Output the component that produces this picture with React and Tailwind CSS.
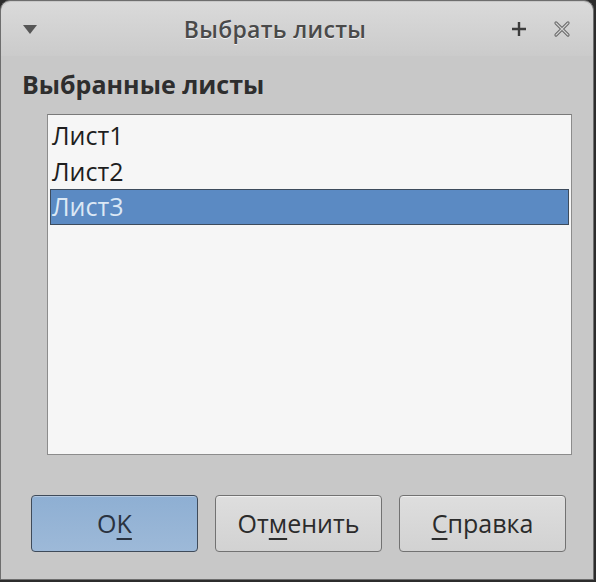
import { useState } from 'react'

const sheets = ['Лист1', 'Лист2', 'Лист3']

function CloseIcon() {
  return (
    <svg width="18" height="18" viewBox="0 0 18 18" className="text-[#6a6a6a]">
      <path d="M3 3 L15 15 M15 3 L3 15" stroke="currentColor" strokeWidth="3.2" strokeLinecap="round" />
      <path d="M3 3 L15 15 M15 3 L3 15" stroke="#d4d4d4" strokeWidth="1.1" strokeLinecap="round" />
    </svg>
  )
}

function PlusIcon() {
  return (
    <svg width="16" height="16" viewBox="0 0 16 16" className="text-[#3c3c3c]">
      <path d="M8 1 V15 M1 8 H15" stroke="currentColor" strokeWidth="2.4" />
    </svg>
  )
}

export default function App() {
  const [selected, setSelected] = useState(2)

  return (
    <div
      className="relative h-[582px] w-[596px] overflow-hidden bg-[#2c2c2c] text-[#2b2b2b]"
      style={{ fontFamily: '"Open Sans", "Noto Sans", sans-serif' }}
    >
      <div className="flex h-[580px] w-[594px] flex-col rounded-t-[10px] border border-[#6e6e6e] bg-[#c8c8c8] pt-[1px]">
        {/* title bar */}
        <div className="flex h-[54px] items-center rounded-t-[10px] bg-gradient-to-b from-[#dadada] to-[#cbcbcb] px-[22px]">
          <div className="h-0 w-0 border-x-[7px] border-t-[9px] border-x-transparent border-t-[#565656]" />
          <div className="flex-1 pl-[2px] text-center text-[23px] font-semibold tracking-[0.3px] text-[#4a4a4a] [text-shadow:0_1px_0_#f2f2f2]">
            Выбрать листы
          </div>
          <div className="flex items-center gap-[26px]">
            <PlusIcon />
            <CloseIcon />
          </div>
        </div>

        {/* body */}
        <div className="flex flex-1 flex-col px-[21px]">
          <div className="mt-[12px] text-[25px] font-bold leading-[32px] text-[#2e2e2e]">Выбранные листы</div>

          <div className="ml-[25px] mt-[14px] h-[341px] border border-[#8c8c8c] border-t-[#7a7a7a] bg-[#f6f6f6] px-[2px] pt-[2px]">
            {sheets.map((name, i) => (
              <div
                key={name}
                onClick={() => setSelected(i)}
                className={
                  i === selected
                    ? 'h-[36px] border border-[#3d4b5c] bg-[#5b8ac3] pl-[1px] text-[25px] leading-[32px] text-[#dce8f5]'
                    : 'h-[36px] border border-transparent pl-[1px] text-[25px] leading-[34px] text-[#1e1e1e]'
                }
              >
                {name}
              </div>
            ))}
          </div>

          <div className="mt-[40px] flex gap-[17px] pl-[9px]">
            <button className="h-[57px] w-[167px] rounded-[4px] border border-[#3f4b5a] bg-gradient-to-b from-[#8eafd3] to-[#9db9d8] text-[25px] text-[#2a3240] shadow-[inset_0_1px_0_#b3c8e0]">
              O<u className="underline-offset-[5px]">K</u>
            </button>
            <button className="h-[57px] w-[167px] rounded-[4px] border border-[#727272] bg-gradient-to-b from-[#dedede] to-[#d2d2d2] text-[25px] text-[#2b2b2b] shadow-[inset_0_1px_0_#f0f0f0]">
              От<u className="underline-offset-[5px]">м</u>енить
            </button>
            <button className="h-[57px] w-[167px] rounded-[4px] border border-[#727272] bg-gradient-to-b from-[#dedede] to-[#d2d2d2] text-[25px] text-[#2b2b2b] shadow-[inset_0_1px_0_#f0f0f0]">
              <u className="underline-offset-[5px]">С</u>правка
            </button>
          </div>
        </div>
      </div>
    </div>
  )
}
